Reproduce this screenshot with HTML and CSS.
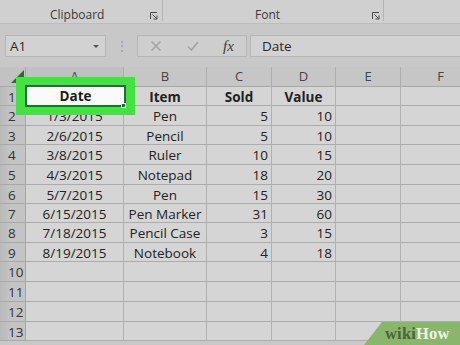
FILE: index.html
```html
<!DOCTYPE html>
<html>
<head>
<meta charset="utf-8">
<link rel="stylesheet" href="styles.css">
</head>
<body>
<div class="app">
  <div class="ribbon">
    <div class="group g-clip">
      <span class="glabel">Clipboard</span>
      <svg class="launch" viewBox="0 0 8 8"><path d="M0.5 7 V0.5 H7" /><path d="M2.5 2.5 L7 7 M7 3.5 V7 H3.5" /></svg>
    </div>
    <div class="group g-font">
      <span class="glabel">Font</span>
      <svg class="launch" viewBox="0 0 8 8"><path d="M0.5 7 V0.5 H7" /><path d="M2.5 2.5 L7 7 M7 3.5 V7 H3.5" /></svg>
    </div>
    <div class="group g-rest"></div>
  </div>

  <div class="fbar">
    <div class="namebox">
      <span class="nb-text">A1</span>
      <svg class="caret" viewBox="0 0 6 3"><path d="M0 0 H6 L3 3 Z" /></svg>
    </div>
    <div class="dots">⋮</div>
    <div class="fxbox">
      <svg class="ficon" viewBox="0 0 12 12"><path d="M1.5 1.5 L10.5 10.5 M10.5 1.5 L1.5 10.5" /></svg>
      <svg class="ficon" viewBox="0 0 12 12"><path d="M1 6.5 L4.5 10 L11 2" /></svg>
      <span class="fx">fx</span>
    </div>
    <div class="formula">Date</div>
  </div>

  <div class="sheet">
    <div class="grid">
      <div class="corner"><span class="tri"></span></div>
      <div class="ch sel">A</div><div class="ch">B</div><div class="ch">C</div><div class="ch">D</div><div class="ch">E</div><div class="ch">F</div>

      <div class="rh">1</div><div class="c ctr b">Date</div><div class="c ctr b">Item</div><div class="c ctr b">Sold</div><div class="c ctr b">Value</div><div class="c"></div><div class="c"></div>
      <div class="rh">2</div><div class="c ctr">1/3/2015</div><div class="c ctr">Pen</div><div class="c num">5</div><div class="c num">10</div><div class="c"></div><div class="c"></div>
      <div class="rh">3</div><div class="c ctr">2/6/2015</div><div class="c ctr">Pencil</div><div class="c num">5</div><div class="c num">10</div><div class="c"></div><div class="c"></div>
      <div class="rh">4</div><div class="c ctr">3/8/2015</div><div class="c ctr">Ruler</div><div class="c num">10</div><div class="c num">15</div><div class="c"></div><div class="c"></div>
      <div class="rh">5</div><div class="c ctr">4/3/2015</div><div class="c ctr">Notepad</div><div class="c num">18</div><div class="c num">20</div><div class="c"></div><div class="c"></div>
      <div class="rh">6</div><div class="c ctr">5/7/2015</div><div class="c ctr">Pen</div><div class="c num">15</div><div class="c num">30</div><div class="c"></div><div class="c"></div>
      <div class="rh">7</div><div class="c ctr">6/15/2015</div><div class="c ctr">Pen Marker</div><div class="c num">31</div><div class="c num">60</div><div class="c"></div><div class="c"></div>
      <div class="rh">8</div><div class="c ctr">7/18/2015</div><div class="c ctr">Pencil Case</div><div class="c num">3</div><div class="c num">15</div><div class="c"></div><div class="c"></div>
      <div class="rh">9</div><div class="c ctr">8/19/2015</div><div class="c ctr">Notebook</div><div class="c num">4</div><div class="c num">18</div><div class="c"></div><div class="c"></div>
      <div class="rh">10</div><div class="c"></div><div class="c"></div><div class="c"></div><div class="c"></div><div class="c"></div><div class="c"></div>
      <div class="rh">11</div><div class="c"></div><div class="c"></div><div class="c"></div><div class="c"></div><div class="c"></div><div class="c"></div>
      <div class="rh">12</div><div class="c"></div><div class="c"></div><div class="c"></div><div class="c"></div><div class="c"></div><div class="c"></div>
      <div class="rh">13</div><div class="c"></div><div class="c"></div><div class="c"></div><div class="c"></div><div class="c"></div><div class="c"></div>
    </div>
    <div class="selection"><div class="active">Date</div><span class="handle"></span></div>
    <div class="wikihow"><span class="wiki">wiki</span><span class="how">How</span></div>
  </div>
</div>
</body>
</html>
```

FILE: styles.css
```css
* { box-sizing: border-box; }
html, body { margin: 0; padding: 0; }
body {
  width: 460px;
  height: 345px;
  overflow: hidden;
  background: #c8c8c8;
  font-family: "Open Sans", "Noto Sans", sans-serif;
  color: #222;
}
.app { width: 460px; height: 345px; display: flex; flex-direction: column; }

/* ribbon */
.ribbon {
  height: 24px;
  flex: none;
  display: flex;
  background: #d0d0d0;
  border-bottom: 1px solid #bdbdbd;
}
.group {
  display: flex;
  align-items: flex-end;
  height: 21px;
  border-right: 1px solid #b4b4b4;
}
.g-clip { width: 163px; padding-left: 50px; padding-right: 4px; }
.g-font { width: 221px; padding-left: 92px; padding-right: 3px; }
.g-rest { flex: 1; border-right: none; }
.glabel { font-size: 12px; line-height: 14px; color: #3a3a3a; margin-bottom: -1px; }
.launch {
  margin-left: auto;
  width: 8px; height: 8px;
  margin-bottom: 1px;
  fill: none; stroke: #4a4a4a; stroke-width: 1;
}

/* formula bar */
.fbar {
  height: 43px;
  flex: none;
  display: flex;
  align-items: flex-start;
  padding-top: 11px;
  padding-left: 5px;
  background: #c8c8c8;
}
.namebox {
  width: 101px; height: 22px;
  background: #d2d2d2;
  border: 1px solid #b6b6b6;
  display: flex; align-items: center;
  padding: 0 6px 0 4px;
}
.nb-text { font-size: 13.5px; color: #2a2a2a; }
.caret { margin-left: auto; width: 6px; height: 3px; fill: #555; }
.dots {
  width: 31px; height: 22px;
  text-align: center; font-size: 14px; line-height: 22px;
  color: #a0a0a0;
}
.fxbox {
  width: 110px; height: 22px;
  background: #cecece;
  border: 1px solid #b6b6b6;
  display: flex; align-items: center;
  padding-left: 12px;
}
.ficon { width: 12px; height: 12px; fill: none; stroke: #a4a4a4; stroke-width: 1.6; margin-right: 25px; }
.fx { font-family: "Liberation Serif", serif; font-style: italic; font-size: 15px; color: #3c3c3c; margin-left: -1px; }
.formula {
  margin-left: 3px;
  flex: 1; height: 22px;
  background: #d2d2d2;
  border: 1px solid #b6b6b6;
  border-right: none;
  padding-left: 11px;
  font-size: 13.5px; line-height: 20px; color: #2a2a2a;
}

/* sheet */
.sheet { position: relative; flex: 1; overflow: hidden; }
.grid {
  display: grid;
  grid-template-columns: 26px 98px 83px 65px 64px 65px 80px;
  grid-template-rows: 20px 19px 20px 19px 20px 20px 19px 19px 20px 19px 20px 20px 20px 19px;
  background: #d5d5d5;
}
.corner {
  background: #c2c2c2;
  border-right: 1px solid #a8a8a8;
  border-bottom: 1px solid #a8a8a8;
  position: relative;
}
.tri {
  position: absolute;
  right: 1px; bottom: 3px;
  width: 0; height: 0;
  border-left: 13px solid transparent;
  border-bottom: 13px solid #2f6a35;
}
.ch {
  background: #c6c6c6;
  border-right: 1px solid #adadad;
  border-bottom: 1px solid #a8a8a8;
  text-align: center;
  font-size: 13px; line-height: 19px; color: #454545;
}
.ch.sel { background: #bfbfc4; }
.rh {
  background: linear-gradient(to right, #b9b9b9, #c4c4c4 40%);
  border-right: 1px solid #a6a6a6;
  border-bottom: 1px solid #a8a8a8;
  padding-left: 8px;
  font-size: 13.5px; line-height: 20px; color: #333;
}
.c {
  border-right: 1px solid #b0b0b0;
  border-bottom: 1px solid #acacac;
  font-size: 13.5px; line-height: 20px; color: #222;
  white-space: nowrap; overflow: hidden;
}
.ctr { text-align: center; }
.num { text-align: right; padding-right: 3px; }
.b { font-weight: 700; }

.selection {
  position: absolute;
  left: 16px; top: 10px;
  width: 119px; height: 38px;
  background: #44e044;
  padding: 8px 9px 8px 9px;
}
.active {
  width: 100%; height: 100%;
  background: #fafafa;
  border: 2px solid #1f6e33;
  text-align: center;
  font-size: 13.5px; font-weight: 700; line-height: 18px; color: #1a1a1a;
}
.handle {
  position: absolute;
  right: 9px; bottom: 7px;
  width: 5px; height: 5px;
  background: #1f6e33;
  border: 1px solid #fafafa;
}

.wikihow {
  position: absolute;
  right: 0; bottom: 0;
  width: 96px; height: 23px;
  background: #8ab56c;
  clip-path: polygon(18px 0, 100% 0, 100% 100%, 0 100%);
  padding-left: 21px;
  font-family: "Liberation Serif", "DejaVu Serif", serif;
  font-weight: 700; font-size: 16.5px; line-height: 23px;
  letter-spacing: 0.2px;
}
.wiki { color: #4d6438; }
.how { color: #eef3e8; }
```
